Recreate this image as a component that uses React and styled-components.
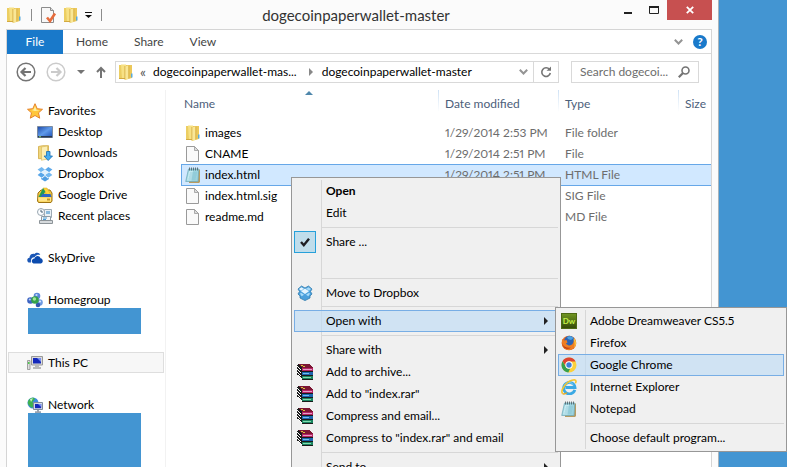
import React from "react";
import styled, { createGlobalStyle, css } from "styled-components";

const Global = createGlobalStyle`
  *, *::before, *::after { box-sizing: border-box; }
  body { margin: 0; background: #4395d2; }
  body, button, input, table {
    font-family: "Lato", "Open Sans", sans-serif;
    font-size: 12px;
    line-height: 16px;
    font-variant-numeric: proportional-nums;
  }
  button { border: 0; padding: 0; margin: 0; background: none; color: inherit; text-align: left; white-space: nowrap; }
  svg { display: block; flex: none; }
`;

/* ---------- icons ---------- */
const Svg = ({ s = 16, w, h, vb, children, label }) => (
  <svg width={w || s} height={h || s} viewBox={vb || `0 0 ${w || s} ${h || s}`} aria-hidden={!label} aria-label={label}>
    {children}
  </svg>
);

const FolderIcon = () => (
  <Svg>
    <path d="M1 1h6v14H1z" fill="#ecce62" />
    <path d="M3 .5h5V14l-4 1z" fill="#f7e184" />
    <path d="M8 1h6V14l-6 1.500z" fill="#ecc85a" />
    <path d="M7 2.500l3.500-1V15L7 16z" fill="#f9e797" />
    <path d="M10.500 1.500h.8v13l-.8.3zM6.500 2h.8v14l-.8-.5zM1 14h5.500v1H1z" fill="#d3aa40" />
    <path d="M13 9.500h1.500v4H13z" fill="#58aadd" />
  </Svg>
);
const PageIcon = () => (
  <Svg>
    <path d="M1.500.5h8l4 4v11h-12z" fill="#fafafa" stroke="#9a9a9a" />
    <path d="M9.500.5v4h4z" fill="#dcdcdc" stroke="#9a9a9a" strokeWidth=".8" />
  </Svg>
);
const PropertiesIcon = () => (
  <Svg>
    <path d="M.500.5h9l3 3v12h-12z" fill="#f8f8f8" stroke="#8c8c8c" />
    <path d="M9.500.5v3h3" fill="#ddd" stroke="#8c8c8c" />
    <path d="M6 10.500l3 3.500 5-7.500" fill="none" stroke="#e66c3c" strokeWidth="2.600" />
  </Svg>
);
const NotepadIcon = () => (
  <Svg>
    <path d="M13 2.500h2V15l-1 1H4v-2z" fill="#b79b61" />
    <path d="M3.500 2h10.300L13 14.500H.7z" fill="#9bd3df" stroke="#6fa9b8" strokeWidth=".7" />
    <path d="M4 4h4L6.500 13.500H2z" fill="#c5eaf1" />
    <path d="M5 6h7M4.500 8h7M4 10h7M3.500 12h7" stroke="#7fbccd" strokeWidth=".6" />
    <path d="M4.500.5v3M6.500.5v3M8.500.5v3M10.500.5v3M12.500.5v3" stroke="#4c5a60" strokeWidth=".8" />
  </Svg>
);
const StarIcon = () => (
  <Svg>
    <path d="M8 .7l2.200 5 5.300.6-4 3.500 1.200 5.400L8 12.500l-4.700 2.700 1.200-5.400-4-3.500 5.300-.6z" fill="#ffc63a" stroke="#e6832b" />
    <path d="M8 3l1.300 3.800 3.500.5L8 8 4.500 7l2.200-.4z" fill="#fff0a4" />
  </Svg>
);
const DesktopIcon = () => (
  <Svg>
    <defs>
      <linearGradient id="desk" x1="0" y1="0" x2="1" y2="1">
        <stop offset="0" stopColor="#1b46a6" />
        <stop offset=".5" stopColor="#5f9aea" />
        <stop offset="1" stopColor="#1d4fb4" />
      </linearGradient>
    </defs>
    <path d="M.5 2.500h15v11H.5z" fill="url(#desk)" stroke="#7b8ba0" />
    <path d="M1 12h14v1.500H1z" fill="#29374f" />
    <path d="M2 12.300h2v1H2z" fill="#7fd36c" />
  </Svg>
);
const DownloadsIcon = () => (
  <Svg>
    <path d="M1.500 1.500l4-.8h6v13h-10z" fill="#f0d67c" stroke="#d0aa42" strokeWidth=".8" />
    <path d="M4.500 2l6-1v13l-6 1.300z" fill="#fbeeb4" stroke="#d9b957" strokeWidth=".6" />
    <path d="M9.500 6.500h3.500V11h2.500l-4.300 4.500L7 11h2.500z" fill="#46adf0" stroke="#1b6fb3" strokeWidth=".8" />
  </Svg>
);
const DropboxIcon = () => (
  <Svg>
    <path d="M4.700 1L8 3.700 4 6.300.6 3.500z" fill="#73b8f0" />
    <path d="M11.300 1L8 3.700l4 2.600 3.400-2.800z" fill="#5ba8ea" />
    <path d="M4 6.300L.6 9l4.100 2.700L8 9z" fill="#58a6e9" />
    <path d="M12 6.300L15.400 9l-4.100 2.700L8 9z" fill="#73b8f0" />
    <path d="M8 3.700l4 2.600L8 9 4 6.300z" fill="#e1f1fd" />
    <path d="M4 12v1l4 2.500 4-2.500v-1l-1 .5L8 10l-3 2.500z" fill="#4e9de2" />
  </Svg>
);
const DropboxMenuIcon = () => (
  <Svg>
    <path d="M4.500 1L8 3l3.500-2L15 4l-1.500 2.500L15 9l-2 2v2l-5 2.600L3 13v-2L1 9l1.500-2.500L1 4z" fill="#4ba0dc" stroke="#347eaf" strokeWidth=".8" />
    <path d="M8 3.500l4 2.800L8 9 4 6.300zM2 4l2.500-1.800L7 3.700 4 5.700z" fill="#e4f5ff" />
    <path d="M14 4l-2.500-1.800L9 3.700l3 2zM3 8.700l1-1 3 2-2.300 1.500zM13 8.700l-1-1-3 2 2.300 1.500z" fill="#a9dbf9" />
  </Svg>
);
const DriveIcon = () => (
  <Svg>
    <path d="M1 6l3-3h9l2 3v8l-1 1.500H1.500L.5 14z" fill="#f5cc42" stroke="#9e7315" />
    <path d="M6 1h4l4.500 8h-4z" fill="#ffd23c" stroke="#d3a81d" strokeWidth=".5" />
    <path d="M6 1l2.300 3.800L5 10H1.500z" fill="#239b55" />
    <path d="M5.500 7h8l1 3h-11z" fill="#2f66c5" />
    <path d="M1 10.500h13v4H2z" fill="#ffe48a" />
    <path d="M10 11.500h3v2h-3z" fill="#c59422" />
  </Svg>
);
const RecentIcon = () => (
  <Svg>
    <path d="M7.500 1.500h7v8h-7z" fill="#e9f0f5" stroke="#9caab4" />
    <path d="M9 3h4v3H9z" fill="#88b9dc" />
    <path d="M4.500 8.500h9v4h-9z" fill="#f5f5f5" stroke="#8d9ba5" />
    <path d="M6 10h4M6 11.500h3" stroke="#4a9ed8" />
    <path d="M2.500 12.500h13v3h-13z" fill="#d6dadd" stroke="#8d9499" />
    <circle cx="4" cy="4" r="3.500" fill="#fbfdff" stroke="#98a6b0" />
    <path d="M4 1.800V4h2" fill="none" stroke="#4a6275" />
  </Svg>
);
const SkyDriveIcon = () => (
  <Svg>
    <path d="M1.500 12.500C-.5 11 0 8 2.500 7.800 2.500 5 5 3 7.500 4c1.500-2 5-1.600 5.800.8-3-.6-5 .7-5.700 2.400C5 7 3.500 9 4 12.500z" fill="#1b57b6" />
    <path d="M6.500 13.500C4 13 4.200 9 7.500 8.600c.6-3.200 5-3.600 6 -.4 2.600.3 3.200 4.500.5 5.300z" fill="#0c4bae" />
  </Svg>
);
const HomegroupIcon = () => (
  <Svg>
    <circle cx="10" cy="4" r="3.300" fill="#5c88d8" />
    <circle cx="3.500" cy="8.500" r="3.300" fill="#3d64c2" />
    <circle cx="12.500" cy="10.500" r="3.300" fill="#6f9be2" />
    <circle cx="11" cy="13" r="2.300" fill="#3555b0" />
    <circle cx="8" cy="8" r="3.800" fill="#35a24a" />
    <circle cx="7.400" cy="7" r="1.700" fill="#a2e59a" />
    <circle cx="9.500" cy="3" r="1.100" fill="#c6dbfb" />
    <circle cx="2.800" cy="7.500" r="1.100" fill="#b9d0f7" />
    <circle cx="13" cy="9.500" r="1.100" fill="#d7e6fd" />
  </Svg>
);
const PcIcon = () => (
  <Svg>
    <path d="M4.500 1.500h11v8.500h-11z" fill="#dadada" stroke="#989898" />
    <path d="M6 3h8v5.500H6z" fill="#1528bb" />
    <path d="M10 3h4v4z" fill="#7890f2" />
    <path d="M8 10h4v2h2v2H6v-2h2z" fill="#b9b9b9" />
    <path d="M.5 5.500h2.500v9H.5z" fill="#dedede" stroke="#8d8d8d" strokeWidth=".8" />
    <path d="M1 7h1.500v2H1z" fill="#4dc94d" />
  </Svg>
);
const NetworkIcon = () => (
  <Svg>
    <circle cx="6" cy="6" r="5.500" fill="#3b8be0" />
    <path d="M2 2.500C5 0 7 .6 8 2L5.500 5 7 8l-2 3C2 9 .5 7 .8 5z" fill="#3fb24f" />
    <path d="M3 2l3-.8L4 5z" fill="#c9f3c4" />
    <path d="M6.500 5.500h9v7h-9z" fill="#d3dae4" stroke="#7f8b9d" />
    <path d="M8 7h6.200v4.200H8z" fill="#1528bb" />
    <path d="M11 7h3.200v3z" fill="#7890f2" />
    <path d="M10 13h2v1.300h2V16H8v-1.700h2z" fill="#9aa3b0" />
  </Svg>
);
const RarIcon = () => (
  <Svg>
    <g shapeRendering="crispEdges">
      <path d="M1 0h11l4 4v12H5l-5-5V1z" fill="#1a1a1a" />
      <path d="M1 0h11l4 4H5z" fill="#7c1533" />
      <path d="M4 1h2v1H4zM6 2h2v1H6z" fill="#d8c63a" />
      <path d="M5 4h11v3H5z" fill="#b52466" />
      <path d="M6 5h9v1H6z" fill="#e79cc4" />
      <path d="M5 8h11v3H5z" fill="#1c66b0" />
      <path d="M6 9h6v1H6z" fill="#6fbdf0" />
      <path d="M5 12h11v3H5z" fill="#1b8460" />
      <path d="M6 13h8v1H6z" fill="#7fdcae" />
      <path d="M0 2h1v1h1v1h1v1h1v1H3V5H2V4H1V3H0zM0 5h1v1h1v1h1v1h1v1H3V8H2V7H1V6H0zM0 8h1v1h1v1h1v1h1v1H3v-1H2v-1H1V9H0zM1 11h1v1h1v1h1v1h1v1H4v-1H3v-1H2v-1H1z" fill="#fff" />
    </g>
  </Svg>
);
const DreamweaverMark = styled.span`
  display: grid;
  place-items: center;
  width: 16px;
  height: 16px;
  background: linear-gradient(#6f9421, #354a09);
  border: 1px solid #4e6913;
  color: #c6f24a;
  font-size: 8px;
  font-weight: 700;
  line-height: 12px;
`;
const FirefoxIcon = () => (
  <Svg>
    <circle cx="8" cy="8" r="7.300" fill="#e4661c" />
    <circle cx="8.500" cy="6" r="5.200" fill="#2c64b5" />
    <path d="M6 2c2-1.500 5-1 6.500 1L10 5 7 4z" fill="#4aa3e2" />
    <path d="M1 4l2.500 1.500L5.500 5l1 2.500-1.700 1.200 2.500 1.500C10 11 12.500 9 12.500 6l2 1c.5 5-3 8-6.500 8S1 12.500.8 8z" fill="#ef7d22" />
    <path d="M13 3c2.500 3 3 7 0 10 1-3 .8-6-.5-8z" fill="#fbc43c" />
    <path d="M1 8c1 4 5 5.500 9 4.500-3 2.500-8 1.500-9-4.500z" fill="#bb3514" />
  </Svg>
);
const ChromeIcon = () => (
  <Svg>
    <circle cx="8" cy="8" r="7.500" fill="#fbd03b" />
    <path d="M1.500 4.300A7.500 7.500 0 0 1 14.600 4.500H8A3.500 3.500 0 0 0 4.700 9z" fill="#dd4332" />
    <path d="M1.500 4.300L5 10a3.500 3.500 0 0 0 4.300 1.200L7.300 15.500A7.500 7.500 0 0 1 1.500 4.300z" fill="#36a04d" />
    <circle cx="8" cy="8" r="3.700" fill="#fff" />
    <circle cx="8" cy="8" r="2.700" fill="#3d7fd8" />
  </Svg>
);
const IeIcon = () => (
  <Svg>
    <path d="M13.800 10.800A5.700 5.700 0 1 1 14 8.500H4.500" fill="none" stroke="#3ba9e4" strokeWidth="2.800" />
    <path d="M3.200 6.500A5.300 5.300 0 0 1 12.500 6" fill="none" stroke="#8ad4f7" strokeWidth="1" />
    <path d="M1.500 14.500C-1 11 6 1 13.500.8c2.300.2 1.500 2.500.8 3.500" fill="none" stroke="#f4c52e" strokeWidth="1.600" />
    <path d="M1.500 14.500c1 .8 3 .3 4.500-.7" fill="none" stroke="#e5a91f" strokeWidth="1.300" />
  </Svg>
);
const CheckIcon = () => (
  <Svg>
    <path d="M4 8l2.800 3.200L12 4.800" fill="none" stroke="#1e1e24" strokeWidth="2.400" />
  </Svg>
);
const NavArrow = ({ forward }) => (
  <Svg s={20}>
    <circle cx="10" cy="10" r="8.800" fill="none" stroke={forward ? "#cbcbcb" : "#747474"} strokeWidth="1.500" />
    <path
      d={forward ? "M5 10h9M10.500 6l4 4-4 4" : "M15 10H6M9.500 6l-4 4 4 4"}
      fill="none" stroke={forward ? "#cbcbcb" : "#747474"} strokeWidth="2.200"
    />
  </Svg>
);
const UpArrow = () => (
  <Svg s={12}>
    <path d="M6 12V2M2 6l4-4 4 4" fill="none" stroke="#747474" strokeWidth="2" />
  </Svg>
);
const Caret = ({ color = "#747474" }) => (
  <Svg w={8} h={4}><path d="M0 0h8L4 4z" fill={color} /></Svg>
);
const QatCaret = () => (
  <Svg w={7} h={6}><path d="M0 0h7v1H0zM0 3h7L3.500 6z" fill="#111" /></Svg>
);
const RightCaret = ({ color = "#222" }) => (
  <Svg w={4} h={8}><path d="M0 0l4 4-4 4z" fill={color} /></Svg>
);
const Chevron = () => (
  <Svg w={9} h={6}><path d="M.8.8l3.700 3.700L8.200.8" fill="none" stroke="#949494" strokeWidth="2" /></Svg>
);
const RefreshIcon = () => (
  <Svg s={12}>
    <path d="M9.500 3.500A4.300 4.300 0 1 0 10.300 7" fill="none" stroke="#747474" strokeWidth="1.600" />
    <path d="M6.500 4.800h4.500V.5z" fill="#747474" />
  </Svg>
);
const SearchIcon = () => (
  <Svg s={12}>
    <circle cx="7.500" cy="4.500" r="3.500" fill="none" stroke="#747474" strokeWidth="1.600" />
    <path d="M5 7L.8 11.200" stroke="#747474" strokeWidth="2.200" />
  </Svg>
);

/* ---------- window frame ---------- */
const Desktop = styled.div`
  position: relative;
  height: 100vh;
  overflow: hidden;
  display: flex;
  padding-right: 68px;
`;
const Window = styled.div`
  flex: 1;
  min-width: 0;
  display: flex;
  flex-direction: column;
  padding: 0 6px;
  background: #fbfbfb;
  border-right: 1px solid #a9b4bb;
`;
const TitleBar = styled.header`
  display: flex;
  align-items: center;
  height: 29px;
`;
const QuickAccess = styled.div`
  display: flex;
  align-items: center;
  gap: 6px;
  button { display: block; }
`;
const Pipe = styled.span`
  width: 1px;
  height: 12px;
  margin: 0 3px;
  background: #8c8c8c;
`;
const Title = styled.h1`
  flex: 1;
  margin: 0;
  text-align: center;
  font-size: 15px;
  line-height: 20px;
  font-weight: 400;
  color: #333;
`;
const WindowControls = styled.div`
  display: flex;
  align-self: flex-start;
  padding-left: 8px;
`;
const ControlButton = styled.button`
  display: grid;
  place-items: center;
  width: ${(p) => (p.$close ? 45 : 26)}px;
  height: 20px;
  ${(p) => p.$close && css`background: #c75050;`}
`;
const Client = styled.div`
  flex: 1;
  min-height: 0;
  display: flex;
  flex-direction: column;
  background: #fff;
  border: 1px solid #d5d5d5;
  border-bottom: 0;
`;
const Ribbon = styled.div`
  display: flex;
  align-items: center;
  height: 24px;
  border-bottom: 1px solid #d9d9d9;
`;
const Tab = styled.button`
  height: 24px;
  padding: 0 13px;
  color: #444;
  ${(p) => p.$file && css`
    width: 56px;
    padding: 0;
    text-align: center;
    background: #1979ca;
    color: #fff;
  `}
`;
const RibbonTools = styled.div`
  display: flex;
  align-items: center;
  gap: 10px;
  margin-left: auto;
  padding-right: 4px;
`;
const HelpButton = styled.button`
  width: 14px;
  height: 14px;
  border-radius: 50%;
  background: #1979ca;
  color: #fff;
  font-weight: 700;
  line-height: 14px;
  text-align: center;
`;
const AddressRow = styled.div`
  display: flex;
  align-items: center;
  padding: 7px 12px 7px 9px;
`;
const HistoryButtons = styled.div`
  display: flex;
  align-items: center;
  justify-content: space-between;
  width: 99px;
  padding-right: 8px;
`;
const AddressBox = styled.div`
  flex: 1;
  display: flex;
  align-items: center;
  min-width: 0;
  height: 22px;
  border: 1px solid #d9d9d9;
  padding-left: 2px;
`;
const Crumb = styled.button`
  margin-left: ${(p) => p.$gap}px;
`;
const CrumbMark = styled.span`
  margin-left: 6px;
  color: #555;
  font-size: 14px;
`;
const BoxEnd = styled.div`
  display: flex;
  align-items: center;
  margin-left: auto;
  height: 100%;
`;
const RefreshButton = styled.button`
  display: grid;
  place-items: center;
  width: 25px;
  height: 100%;
  margin-left: 5px;
  border-left: 1px solid #d9d9d9;
`;
const SearchBox = styled.label`
  display: flex;
  align-items: center;
  width: 128px;
  height: 22px;
  margin-left: 12px;
  padding: 0 8px;
  border: 1px solid #d9d9d9;
`;
const SearchInput = styled.input`
  flex: 1;
  min-width: 0;
  padding: 0;
  border: 0;
  outline: 0;
  &::placeholder { color: #6d6d6d; opacity: 1; }
`;
const Body = styled.div`
  flex: 1;
  min-height: 0;
  display: flex;
  overflow: hidden;
`;

/* ---------- navigation pane ---------- */
const Nav = styled.nav`
  flex: none;
  width: 159px;
  padding: 10px 1px 0;
  border-right: 1px solid #f2f2f2;
`;
const NavGroup = styled.div`
  & + & { margin-top: 21px; }
`;
const NavItem = styled.button`
  display: flex;
  align-items: center;
  gap: 5px;
  width: 100%;
  height: 21px;
  padding-left: ${(p) => (p.$child ? 29 : 19)}px;
  ${(p) => p.$active && css`
    background: #f7f7f7;
    box-shadow: inset 0 0 0 1px #dedede;
  `}
`;
const Redacted = styled.div`
  width: 113px;
  height: ${(p) => p.$height}px;
  margin: -2px 0 -3px 20px;
  background: #4395d2;
`;

/* ---------- file list ---------- */
const FileTable = styled.table`
  flex: 1;
  margin-left: 15px;
  align-self: flex-start;
  table-layout: fixed;
  border-collapse: collapse;
  width: 100%;
`;
const Col = styled.col`
  width: ${(p) => p.$width};
`;
const HeadCell = styled.th`
  position: relative;
  height: 32px;
  padding: 6px 0 10px ${(p) => (p.$first ? 3 : 7)}px;
  text-align: left;
  font-weight: 400;
  color: #4c607a;
  background: ${(p) => (p.$first ? "none" : "linear-gradient(#cfe2f5, #fff) left top / 1px 22px no-repeat")};
`;
const SortMark = styled.span`
  position: absolute;
  top: 1px;
  left: calc(50% - 5px);
`;
const FileRow = styled.tr`
  height: 21px;
  ${(p) => p.$selected && css`
    background: #d1e8ff;
    box-shadow: inset 0 1px #66a7e8, inset 1px 0 #66a7e8, 0 1px #66a7e8;
  `}
`;
const Cell = styled.td`
  padding: 0 0 0 7px;
  color: #6d6d6d;
`;
const FileName = styled.div`
  display: flex;
  align-items: center;
  gap: 4px;
  margin-left: -3px;
  color: #000;
`;

/* ---------- menus ---------- */
const Menu = styled.div`
  position: absolute;
  z-index: 1;
  left: ${(p) => p.$left};
  top: ${(p) => p.$top};
  width: ${(p) => p.$width};
  padding: 2px;
  border: 1px solid #979797;
  background: linear-gradient(#d7d7d7, #d7d7d7) 29px 2px / 1px calc(100% - 4px) no-repeat #f0f0f0;
`;
const ItemWrap = styled.div`
  position: relative;
`;
const MenuButton = styled.button`
  display: flex;
  align-items: center;
  width: 100%;
  height: ${(p) => (p.$short ? 21 : 22)}px;
  padding-right: 10px;
  ${(p) => p.$bold && css`font-weight: 700;`}
  ${(p) => p.$active && css`
    background: rgba(190, 219, 245, 0.65);
    box-shadow: inset 0 0 0 1px #78aee5;
  `}
`;
const IconSlot = styled.span`
  display: grid;
  place-items: center;
  width: 22px;
  height: 22px;
  margin-right: 10px;
  ${(p) => p.$checked && css`
    background: #c0ddeb;
    border: 1px solid #26a0da;
  `}
`;
const ItemLabel = styled.span`
  flex: 1;
`;
const Separator = styled.div`
  height: 1px;
  margin: 3px 0 3px 27px;
  background: #d7d7d7;
`;
const BlankItem = styled.div`
  height: 22px;
`;

const MenuItem = ({ icon, label, arrow, checked, ...rest }) => (
  <MenuButton type="button" role="menuitem" {...rest}>
    <IconSlot $checked={checked}>{checked ? <CheckIcon /> : icon}</IconSlot>
    <ItemLabel>{label}</ItemLabel>
    {arrow && <RightCaret />}
  </MenuButton>
);

const favorites = [
  ["Desktop", DesktopIcon],
  ["Downloads", DownloadsIcon],
  ["Dropbox", DropboxIcon],
  ["Google Drive", DriveIcon],
  ["Recent places", RecentIcon],
];
const files = [
  ["images", "1/29/2014 2:53 PM", "File folder", FolderIcon],
  ["CNAME", "1/29/2014 2:51 PM", "File", PageIcon],
  ["index.html", "1/29/2014 2:51 PM", "HTML File", NotepadIcon],
  ["index.html.sig", "", "SIG File", PageIcon],
  ["readme.md", "", "MD File", PageIcon],
];
const archiveItems = ["Add to archive...", 'Add to "index.rar"', "Compress and email...", 'Compress to "index.rar" and email'];

export default function App() {
  return (
    <>
      <Global />
      <Desktop>
        <Window>
          <TitleBar>
            <QuickAccess>
              <FolderIcon />
              <Pipe />
              <button type="button" aria-label="Properties"><PropertiesIcon /></button>
              <button type="button" aria-label="New folder"><FolderIcon /></button>
              <button type="button" aria-label="Customize"><QatCaret /></button>
              <Pipe />
            </QuickAccess>
            <Title>dogecoinpaperwallet-master</Title>
            <WindowControls>
              <ControlButton type="button" aria-label="Minimize">
                <Svg w={8} h={8}><path d="M0 6h8v2H0z" fill="#222" /></Svg>
              </ControlButton>
              <ControlButton type="button" aria-label="Maximize">
                <Svg w={10} h={8}><path d="M.5 1h9v6.500h-9z" fill="none" stroke="#222" /><path d="M0 0h10v2H0z" fill="#222" /></Svg>
              </ControlButton>
              <ControlButton type="button" aria-label="Close" $close>
                <Svg w={8} h={8}><path d="M.8.8l6.400 6.400M7.200.8L.8 7.200" stroke="#fff" strokeWidth="1.800" /></Svg>
              </ControlButton>
            </WindowControls>
          </TitleBar>
          <Client>
            <Ribbon>
              <Tab type="button" $file>File</Tab>
              <Tab type="button">Home</Tab>
              <Tab type="button">Share</Tab>
              <Tab type="button">View</Tab>
              <RibbonTools>
                <button type="button" aria-label="Expand ribbon"><Chevron /></button>
                <HelpButton type="button">?</HelpButton>
              </RibbonTools>
            </Ribbon>
            <AddressRow>
              <HistoryButtons>
                <button type="button" aria-label="Back"><NavArrow /></button>
                <button type="button" aria-label="Forward"><NavArrow forward /></button>
                <button type="button" aria-label="Recent locations"><Caret /></button>
                <button type="button" aria-label="Up"><UpArrow /></button>
              </HistoryButtons>
              <AddressBox>
                <FolderIcon />
                <CrumbMark>«</CrumbMark>
                <Crumb type="button" $gap={7}>dogecoinpaperwallet-mas...</Crumb>
                <Crumb type="button" $gap={12} aria-label="Subfolders"><RightCaret color="#888" /></Crumb>
                <Crumb type="button" $gap={9}>dogecoinpaperwallet-master</Crumb>
                <BoxEnd>
                  <button type="button" aria-label="Previous locations"><Chevron /></button>
                  <RefreshButton type="button" aria-label="Refresh"><RefreshIcon /></RefreshButton>
                </BoxEnd>
              </AddressBox>
              <SearchBox>
                <SearchInput aria-label="Search" placeholder="Search dogecoi..." />
                <SearchIcon />
              </SearchBox>
            </AddressRow>
            <Body>
              <Nav>
                <NavGroup>
                  <NavItem type="button"><StarIcon />Favorites</NavItem>
                  {favorites.map(([name, Icon]) => (
                    <NavItem type="button" $child key={name}><Icon />{name}</NavItem>
                  ))}
                </NavGroup>
                <NavGroup>
                  <NavItem type="button"><SkyDriveIcon />SkyDrive</NavItem>
                </NavGroup>
                <NavGroup>
                  <NavItem type="button"><HomegroupIcon />Homegroup</NavItem>
                  <Redacted $height={26} />
                </NavGroup>
                <NavGroup>
                  <NavItem type="button" $active><PcIcon />This PC</NavItem>
                </NavGroup>
                <NavGroup>
                  <NavItem type="button"><NetworkIcon />Network</NavItem>
                  <Redacted $height={60} />
                </NavGroup>
              </Nav>
              <FileTable>
                <colgroup>
                  <Col $width="257px" />
                  <Col $width="120px" />
                  <Col $width="120px" />
                  <Col $width="auto" />
                </colgroup>
                <thead>
                  <tr>
                    <HeadCell $first>Name<SortMark><Svg w={8} h={4}><path d="M4 0l4 4H0z" fill="#4f87ab" /></Svg></SortMark></HeadCell>
                    <HeadCell>Date modified</HeadCell>
                    <HeadCell>Type</HeadCell>
                    <HeadCell>Size</HeadCell>
                  </tr>
                </thead>
                <tbody>
                  {files.map(([name, date, type, Icon]) => (
                    <FileRow key={name} $selected={name === "index.html"}>
                      <Cell><FileName><Icon />{name}</FileName></Cell>
                      <Cell>{date}</Cell>
                      <Cell>{type}</Cell>
                      <Cell />
                    </FileRow>
                  ))}
                </tbody>
              </FileTable>
            </Body>
          </Client>
        </Window>

        <Menu role="menu" $left="291px" $top="177px" $width="270px">
          <MenuItem label="Open" $bold />
          <MenuItem label="Edit" />
          <Separator />
          <MenuItem label="Share ..." checked />
          <BlankItem />
          <Separator />
          <MenuItem label="Move to Dropbox" icon={<DropboxMenuIcon />} $short />
          <Separator />
          <ItemWrap>
            <MenuItem label="Open with" arrow $active />
            <Menu role="menu" $left="calc(100% - 3px)" $top="-3px" $width="232px">
              <MenuItem label="Adobe Dreamweaver CS5.5" icon={<DreamweaverMark>Dw</DreamweaverMark>} />
              <MenuItem label="Firefox" icon={<FirefoxIcon />} />
              <MenuItem label="Google Chrome" icon={<ChromeIcon />} $active />
              <MenuItem label="Internet Explorer" icon={<IeIcon />} />
              <MenuItem label="Notepad" icon={<NotepadIcon />} />
              <Separator />
              <MenuItem label="Choose default program..." />
            </Menu>
          </ItemWrap>
          <Separator />
          <MenuItem label="Share with" arrow />
          {archiveItems.map((label) => (
            <MenuItem key={label} label={label} icon={<RarIcon />} />
          ))}
          <Separator />
          <MenuItem label="Send to" arrow />
        </Menu>
      </Desktop>
    </>
  );
}
